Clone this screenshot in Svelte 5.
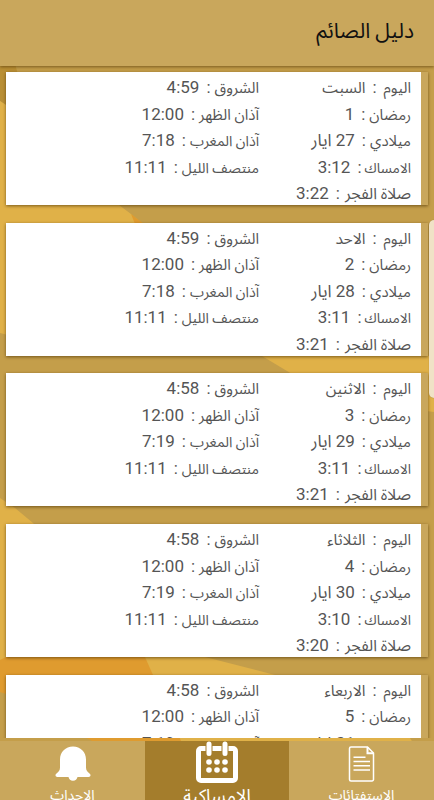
<script>
  const days = [
    { day: 'السبت', ramadan: 1, date: '27 ايار', imsak: '3:12', fajr: '3:22', sunrise: '4:59', dhuhr: '12:00', maghrib: '7:18', midnight: '11:11' },
    { day: 'الاحد', ramadan: 2, date: '28 ايار', imsak: '3:11', fajr: '3:21', sunrise: '4:59', dhuhr: '12:00', maghrib: '7:18', midnight: '11:11' },
    { day: 'الاثنين', ramadan: 3, date: '29 ايار', imsak: '3:11', fajr: '3:21', sunrise: '4:58', dhuhr: '12:00', maghrib: '7:19', midnight: '11:11' },
    { day: 'الثلاثاء', ramadan: 4, date: '30 ايار', imsak: '3:10', fajr: '3:20', sunrise: '4:58', dhuhr: '12:00', maghrib: '7:19', midnight: '11:11' },
    { day: 'الاربعاء', ramadan: 5, date: '31 ايار', imsak: '3:10', fajr: '3:20', sunrise: '4:58', dhuhr: '12:00', maghrib: '7:19', midnight: '11:11' },
  ];

  const columns = [
    [
      ['اليوم', 'day'],
      ['رمضان', 'ramadan'],
      ['ميلادي', 'date'],
      ['الامساك', 'imsak'],
      ['صلاة الفجر', 'fajr'],
    ],
    [
      ['الشروق', 'sunrise'],
      ['آذان الظهر', 'dhuhr'],
      ['آذان المغرب', 'maghrib'],
      ['منتصف الليل', 'midnight'],
    ],
  ];

  let active = $state('imsakiya');
</script>

<div class="app" dir="rtl">
  <svg class="backdrop" viewBox="0 0 434 800" aria-hidden="true">
    <rect width="434" height="800" fill="#c49e4a" />
    <path d="M0 60h14l6 22v32L0 101z" fill="#b98f35" />
    <path d="M0 101l60 40 59 64 12 9 12 10-50 90L20 338 0 333z" fill="#e0b148" />
    <path d="M131 214l13 10h-9z" fill="#df9b2f" />
    <path d="M262 356l30 18 80 30 62 8V356z" fill="#e0b148" />
    <path d="M0 498l15 10 18 15 120 127 52 7 70 18 135 63 6 10H60L0 690z" fill="#e0b148" />
    <path d="M0 660l6-3h139l8 18 28 66H90L0 741z" fill="#df9b2f" />
    <path d="M0 692l6 2 86 47H0z" fill="#c49e4a" />
  </svg>

  <header>
    <h1>دليل الصائم</h1>
  </header>

  <main>
    {#each days as item}
      <article class="card">
        {#each columns as rows}
          <div class="col">
            {#each rows as [label, key]}
              <p class={key}>{label}<span class="colon">:</span><span class="value">{item[key]}</span></p>
            {/each}
          </div>
        {/each}
      </article>
    {/each}
  </main>

  <div class="scroll-thumb"></div>

  <nav>
    <button type="button" class:active={active === 'fatwa'} onclick={() => (active = 'fatwa')}>
      <svg class="icon" viewBox="0 0 36 36" fill="none" stroke="#fff" stroke-width="1.5" aria-hidden="true">
        <path d="M7 1h16.500l6 6v26.500a1.500 1.500 0 0 1-1.500 1.500h-21a1.500 1.500 0 0 1-1.500-1.500v-31a1.500 1.500 0 0 1 1.500-1.500z" />
        <path d="M23.500 1v6.200h6" stroke-width="2" />
        <path d="M9.500 11.200h12M9.500 15.500h16.500M9.500 19.700h16.500M9.500 24h16.500" stroke-width="1.400" />
      </svg>
      <span>الاستفتائات</span>
    </button>
    <button type="button" class:active={active === 'imsakiya'} onclick={() => (active = 'imsakiya')}>
      <svg class="icon" viewBox="0 0 42 42" aria-hidden="true">
        <rect x="2.500" y="7.500" width="37" height="32" rx="2.500" fill="none" stroke="#fff" stroke-width="5" />
        <path d="M13 3v8M29 3v8" stroke="#a47d2c" stroke-width="7" />
        <path d="M13 3v9.500M29 3v9.500" stroke="#fff" stroke-width="5" stroke-linecap="round" />
        <g fill="#fff">
          {#each [21, 29] as cy}
            {#each [13, 21, 29] as cx}
              <circle {cx} {cy} r="2.800" />
            {/each}
          {/each}
        </g>
      </svg>
      <span>الامساكية</span>
    </button>
    <button type="button" class:active={active === 'events'} onclick={() => (active = 'events')}>
      <svg class="icon" viewBox="0 0 36 36" fill="#fff" aria-hidden="true">
        <path d="M18 .5C10.500.5 5 6 5 13.500v8c0 3-1.500 4.500-3.500 6C-.3 28.800.5 31 2.500 31h11a4.600 4.600 0 0 0 9 0h11c2 0 2.800-2.200 1-3.500-2-1.500-3.500-3-3.500-6v-8C31 6 25.500.5 18 .5z" />
      </svg>
      <span>الاحداث</span>
    </button>
  </nav>
</div>

<style>
  :global(body) {
    margin: 0;
    overflow: hidden;
  }

  .app {
    position: relative;
    display: flex;
    flex-direction: column;
    width: 434px;
    height: 800px;
    overflow: hidden;
    font-family: Roboto, 'Noto Sans Arabic', 'DejaVu Sans', sans-serif;
    background: #c49e4a;
  }

  .backdrop {
    position: absolute;
    inset: 0;
    width: 434px;
    height: 800px;
  }

  header {
    position: relative;
    z-index: 1;
    flex: none;
    display: flex;
    align-items: center;
    box-sizing: border-box;
    height: 66px;
    padding: 0 20px 4px;
    background: #c9a75c;
    box-shadow: 0 1px 3px rgba(70, 45, 0, 0.6);
  }

  h1 {
    margin: 0;
    font-size: 21px;
    font-weight: 400;
    line-height: 30px;
    color: #111;
  }

  main {
    position: relative;
    flex: none;
    display: flex;
    flex-direction: column;
    gap: 17.7px;
    height: 672px;
    margin-bottom: 3px;
    padding: 6px 6px 0;
    box-sizing: border-box;
    overflow: hidden;
  }

  .card {
    flex: none;
    display: flex;
    box-sizing: border-box;
    height: 133px;
    padding: 2px 10px 0 0;
    overflow: hidden;
    background: #fff;
    border-right: 7px solid #c9a75c;
    box-shadow: 0 1px 3px rgba(70, 45, 0, 0.65);
  }

  .col {
    width: 152px;
  }

  .col + .col {
    width: 200px;
  }

  p {
    height: 26.5px;
    margin: 0;
    font-size: 15px;
    line-height: 26.5px;
    white-space: nowrap;
    color: #555;
  }

  .colon {
    margin: 0 4px 0 7px;
    font-size: 17px;
  }

  .value {
    font-size: 17px;
    letter-spacing: -0.1px;
  }

  .day .colon {
    margin-right: 7px;
  }

  .day .value {
    font-size: 15.5px;
  }

  .imsak {
    font-size: 13.8px;
  }

  .imsak .colon {
    margin-right: 3px;
  }

  .fajr {
    font-size: 15.8px;
  }

  .fajr .colon {
    margin-right: 5px;
  }

  .maghrib {
    font-size: 14.2px;
  }

  .midnight {
    font-size: 14.2px;
  }

  .scroll-thumb {
    position: absolute;
    top: 220px;
    right: 0;
    width: 5px;
    height: 178px;
    border-radius: 5px 0 0 5px;
    background: #f0e2c6;
    box-shadow: 0 0 1px #8f7437;
  }

  nav {
    position: relative;
    flex: none;
    display: grid;
    grid-template-columns: 145px 144px 145px;
    height: 59px;
    overflow: hidden;
  }

  button {
    display: flex;
    flex-direction: column;
    align-items: center;
    height: 59px;
    padding: 5px 0 0;
    border: 0;
    font: inherit;
    font-size: 14px;
    line-height: 20px;
    color: #fff;
    background: #c9a75c;
    cursor: pointer;
  }

  button .icon {
    flex: none;
    width: 36px;
    height: 36px;
  }

  button span {
    margin-top: 3px;
    white-space: nowrap;
  }

  button.active {
    padding-top: 0;
    font-size: 18px;
    background: #a47d2c;
  }

  button.active .icon {
    width: 42px;
    height: 42px;
  }

  button.active span {
    margin-top: 3px;
  }
</style>
